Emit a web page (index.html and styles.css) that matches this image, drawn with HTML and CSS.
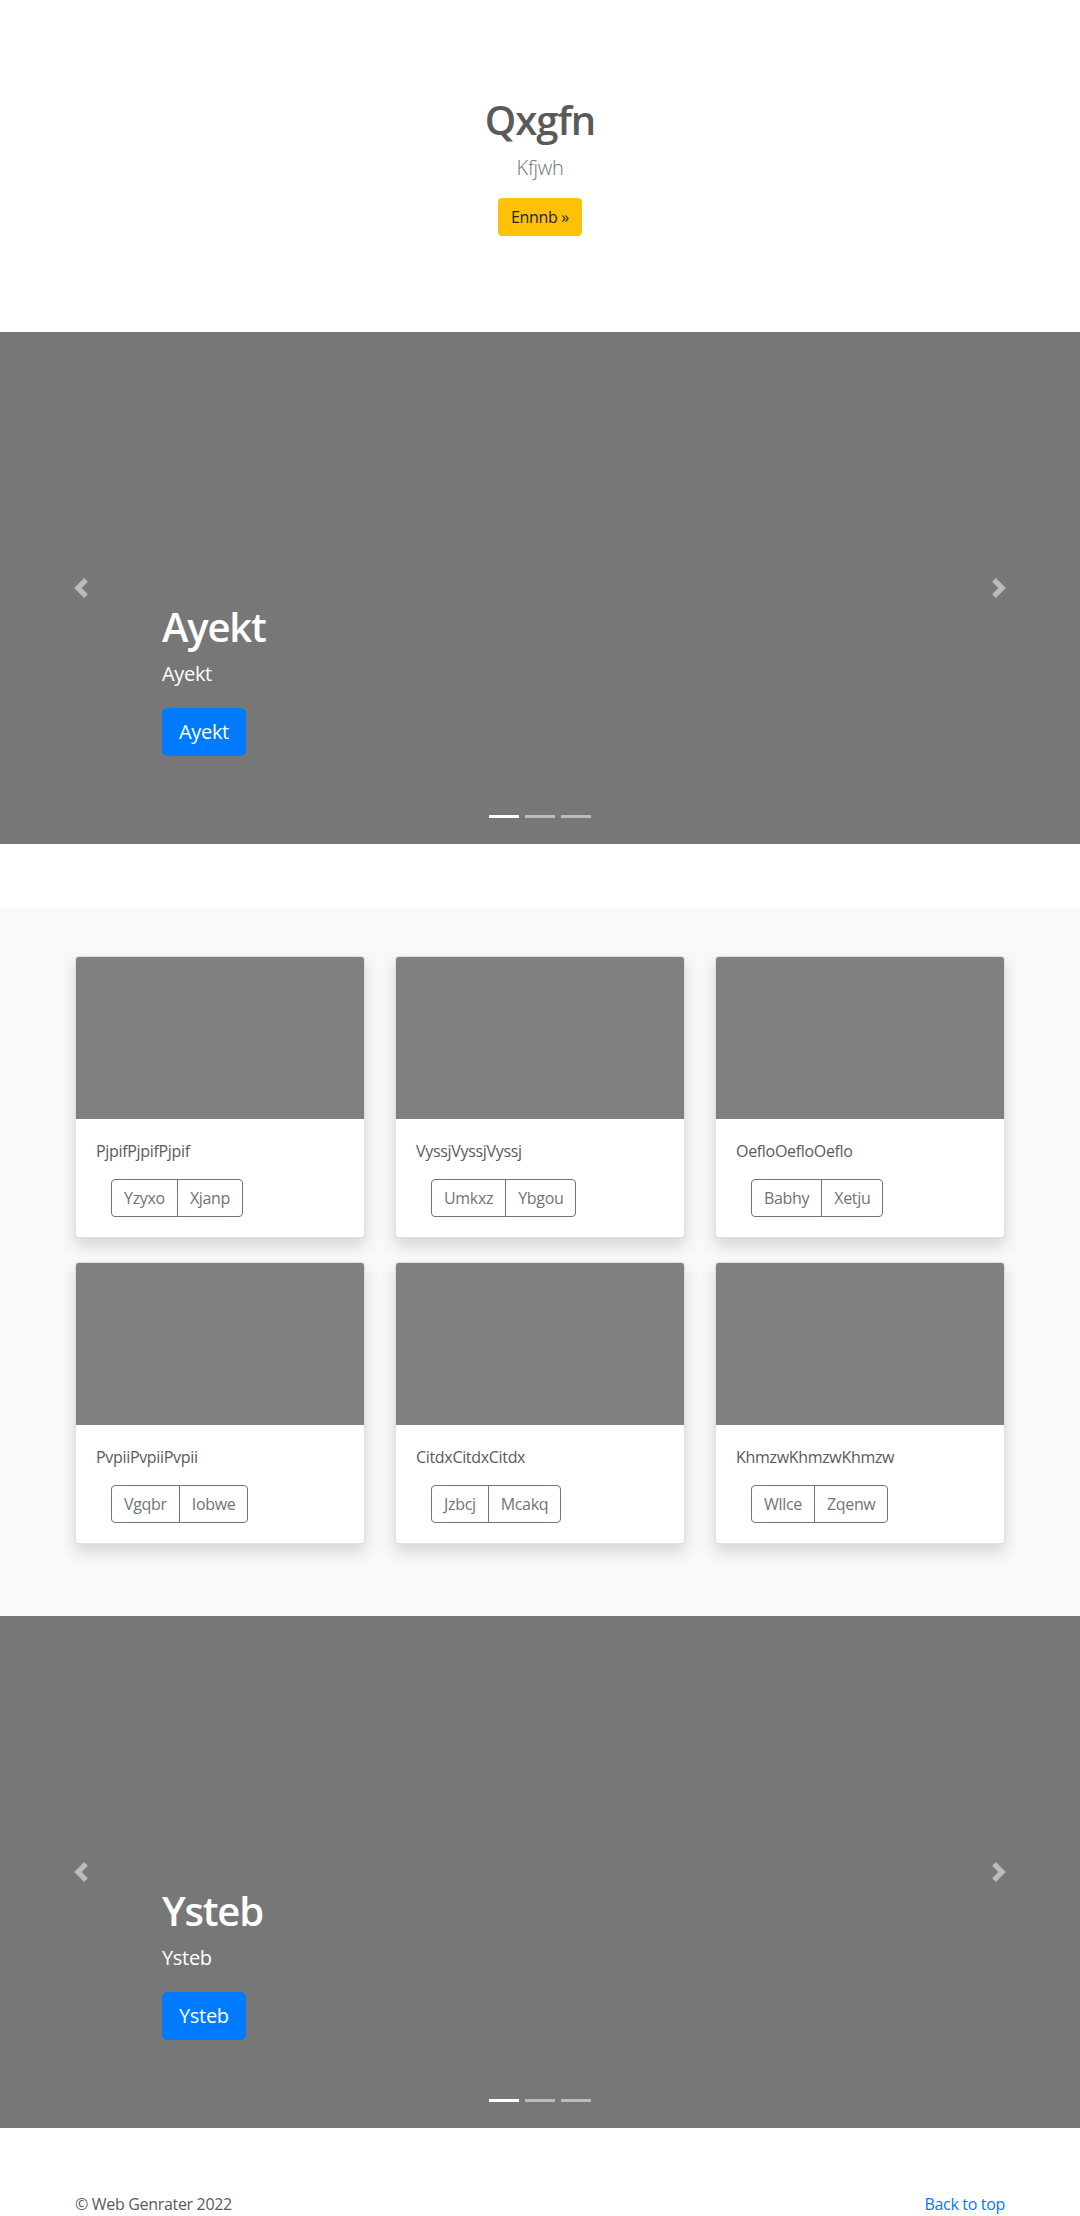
FILE: index.html
```html
<!DOCTYPE html>
<html lang="en">
<head>
<meta charset="utf-8">
<title>Qxgfn</title>
<link rel="stylesheet" href="styles.css">
</head>
<body>
<section class="hero">
  <h1 class="hero-title">Qxgfn</h1>
  <p class="hero-lead">Kfjwh</p>
  <a class="btn btn-warning" href="#">Ennnb »</a>
</section>

<div class="carousel">
  <ol class="indicators">
    <li class="active"></li>
    <li></li>
    <li></li>
  </ol>
  <a class="control control-prev" href="#">
    <svg width="20" height="20" viewBox="0 0 8 8"><path fill="#fff" d="M5.25 0l-4 4 4 4 1.5-1.5-2.5-2.5 2.5-2.5-1.5-1.5z"/></svg>
  </a>
  <a class="control control-next" href="#">
    <svg width="20" height="20" viewBox="0 0 8 8"><path fill="#fff" d="M2.75 0l-1.5 1.5 2.5 2.5-2.5 2.5 1.5 1.5 4-4-4-4z"/></svg>
  </a>
  <div class="caption">
    <h1 class="caption-title">Ayekt</h1>
    <p class="caption-text">Ayekt</p>
    <div class="caption-action"><a class="btn btn-lg btn-primary" href="#">Ayekt</a></div>
  </div>
</div>

<section class="album">
  <div class="container">
    <div class="card-grid">
      <div class="card">
        <div class="card-img"></div>
        <div class="card-body">
          <p class="card-text">PjpifPjpifPjpif</p>
          <div class="btn-group"><a class="btn btn-outline" href="#">Yzyxo</a><a class="btn btn-outline" href="#">Xjanp</a></div>
        </div>
      </div>
      <div class="card">
        <div class="card-img"></div>
        <div class="card-body">
          <p class="card-text">VyssjVyssjVyssj</p>
          <div class="btn-group"><a class="btn btn-outline" href="#">Umkxz</a><a class="btn btn-outline" href="#">Ybgou</a></div>
        </div>
      </div>
      <div class="card">
        <div class="card-img"></div>
        <div class="card-body">
          <p class="card-text">OefloOefloOeflo</p>
          <div class="btn-group"><a class="btn btn-outline" href="#">Babhy</a><a class="btn btn-outline" href="#">Xetju</a></div>
        </div>
      </div>
      <div class="card">
        <div class="card-img"></div>
        <div class="card-body">
          <p class="card-text">PvpiiPvpiiPvpii</p>
          <div class="btn-group"><a class="btn btn-outline" href="#">Vgqbr</a><a class="btn btn-outline" href="#">Iobwe</a></div>
        </div>
      </div>
      <div class="card">
        <div class="card-img"></div>
        <div class="card-body">
          <p class="card-text">CitdxCitdxCitdx</p>
          <div class="btn-group"><a class="btn btn-outline" href="#">Jzbcj</a><a class="btn btn-outline" href="#">Mcakq</a></div>
        </div>
      </div>
      <div class="card">
        <div class="card-img"></div>
        <div class="card-body">
          <p class="card-text">KhmzwKhmzwKhmzw</p>
          <div class="btn-group"><a class="btn btn-outline" href="#">Wllce</a><a class="btn btn-outline" href="#">Zqenw</a></div>
        </div>
      </div>
    </div>
  </div>
</section>

<div class="carousel">
  <ol class="indicators">
    <li class="active"></li>
    <li></li>
    <li></li>
  </ol>
  <a class="control control-prev" href="#">
    <svg width="20" height="20" viewBox="0 0 8 8"><path fill="#fff" d="M5.25 0l-4 4 4 4 1.5-1.5-2.5-2.5 2.5-2.5-1.5-1.5z"/></svg>
  </a>
  <a class="control control-next" href="#">
    <svg width="20" height="20" viewBox="0 0 8 8"><path fill="#fff" d="M2.75 0l-1.5 1.5 2.5 2.5-2.5 2.5 1.5 1.5 4-4-4-4z"/></svg>
  </a>
  <div class="caption">
    <h1 class="caption-title">Ysteb</h1>
    <p class="caption-text">Ysteb</p>
    <div class="caption-action"><a class="btn btn-lg btn-primary" href="#">Ysteb</a></div>
  </div>
</div>

<footer class="footer container">
  <p class="footer-copy">© Web Genrater 2022</p>
  <a class="footer-link" href="#">Back to top</a>
</footer>
</body>
</html>
```
FILE: styles.css
```css
* { box-sizing: border-box; }

html, body {
  margin: 0;
}

body {
  padding-top: 48px;
  padding-bottom: 48px;
  font-family: "Open Sans", "Noto Sans", "Liberation Sans", sans-serif;
  font-size: 16px;
  line-height: 1.5;
  letter-spacing: -0.02em;
  color: #5a5a5a;
  background: #fff;
}

a { text-decoration: none; }

.container {
  width: 930px;
  margin: 0 auto;
}

/* Buttons */
.btn {
  display: inline-block;
  font-size: 16px;
  line-height: 24px;
  padding: 6px 12px;
  border: 1px solid transparent;
  border-radius: 4px;
  text-align: center;
}

.btn-lg {
  font-size: 20px;
  line-height: 30px;
  padding: 8px 16px;
  border-radius: 5px;
}

.btn-warning {
  background: #ffc107;
  border-color: #ffc107;
  color: #212529;
}

.btn-primary {
  background: #007bff;
  border-color: #007bff;
  color: #fff;
}

/* Hero */
.hero {
  text-align: center;
  padding: 48px 0 96px;
}

.hero-title {
  margin: 0 0 9px;
  font-size: 40px;
  line-height: 48px;
  font-weight: 600;
  letter-spacing: -0.025em;
  color: #5a5a5a;
}

.hero-lead {
  margin: 0 0 15px;
  font-size: 20px;
  line-height: 30px;
  font-weight: 300;
  color: #6c757d;
}

/* Carousel */
.carousel {
  position: relative;
  height: 512px;
  background: #777;
  margin-bottom: 64px;
}

.indicators {
  position: absolute;
  left: 15%;
  right: 15%;
  bottom: 0;
  margin: 0 0 16px;
  padding: 0;
  list-style: none;
  display: flex;
  justify-content: center;
}

.indicators li {
  width: 30px;
  height: 3px;
  margin: 0 3px;
  box-sizing: content-box;
  border-top: 10px solid transparent;
  border-bottom: 10px solid transparent;
  background: #fff;
  background-clip: padding-box;
  opacity: .5;
}

.indicators li.active { opacity: 1; }

.control {
  position: absolute;
  top: 0;
  bottom: 0;
  width: 15%;
  display: flex;
  align-items: center;
  justify-content: center;
  opacity: .5;
}

.control svg { display: block; }

.control-prev { left: 0; }
.control-next { right: 0; }

.caption {
  position: absolute;
  left: 15%;
  right: 15%;
  bottom: 48px;
  padding: 20px 0;
  color: #fff;
  text-align: left;
  z-index: 10;
}

.caption-title {
  margin: 0 0 8px;
  font-size: 40px;
  line-height: 48px;
  font-weight: 600;
  letter-spacing: -0.03em;
}

.caption-text {
  margin: 0 0 19px;
  font-size: 20px;
  line-height: 30px;
}

.caption-action {
  display: flex;
  margin-bottom: 20px;
}

/* Album */
.album {
  background: #f8f9fa;
  padding: 48px 0 72px;
  margin-bottom: 0;
}

.card-grid {
  display: grid;
  grid-template-columns: repeat(3, 1fr);
  column-gap: 30px;
  row-gap: 24px;
}

.card {
  background: #fff;
  border: 1px solid rgba(0, 0, 0, .125);
  border-radius: 4px;
  overflow: hidden;
  box-shadow: 0 8px 16px rgba(0, 0, 0, .15);
}

.card-img {
  height: 162px;
  background: #808080;
}

.card-body {
  padding: 20px;
}

.card-text {
  margin: 0 0 16px;
  color: #5a5a5a;
}

.btn-group {
  display: inline-flex;
  margin-left: 15px;
}

.btn-outline {
  color: #6c757d;
  border-color: #6c757d;
  background: transparent;
}

.btn-group .btn-outline:first-child {
  border-top-right-radius: 0;
  border-bottom-right-radius: 0;
}

.btn-group .btn-outline + .btn-outline {
  margin-left: -1px;
  border-top-left-radius: 0;
  border-bottom-left-radius: 0;
}

/* Footer */
.footer {
  display: flex;
  justify-content: space-between;
  align-items: flex-start;
}

.footer-copy {
  margin: 0 0 16px;
}

.footer-link {
  color: #007bff;
}
```
